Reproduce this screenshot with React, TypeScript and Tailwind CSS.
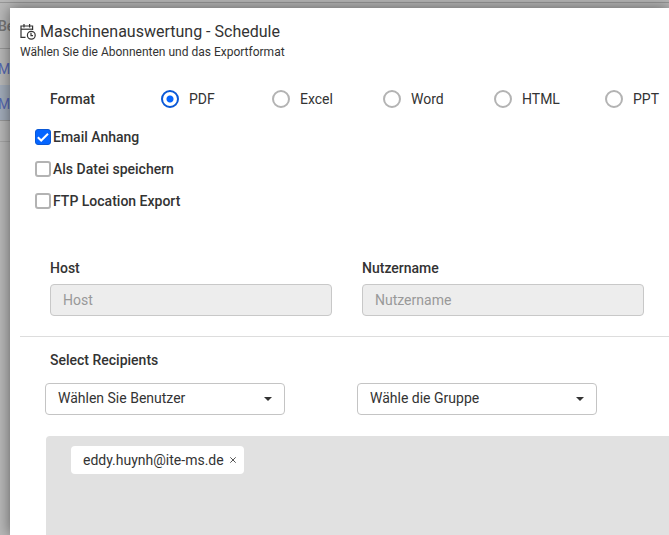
import { useState } from "react";

const formats = ["PDF", "Excel", "Word", "HTML", "PPT"];

const CalendarClockIcon = () => (
  <svg width="16" height="16" viewBox="0 0 16 16" fill="none" stroke="#333333" strokeWidth="1.2" aria-hidden="true">
    <path d="M5.5 13.4H1V2h11.6v4" />
    <path d="M1 5.2h11.6" />
    <path d="M4 0v3.4M9.6 0v3.4" />
    <circle cx="11.3" cy="11.3" r="3.9" />
    <path d="M11 8.8v2.8h2" />
  </svg>
);

const Page = () => (
  <table className="-ml-[2px] w-[calc(100%+2px)] border-collapse border-t border-[#989898] text-left text-sm">
    <thead>
      <tr className="h-[46px] border-b border-[#989898] text-[#777777]">
        <th className="font-medium">Be</th>
      </tr>
    </thead>
    <tbody className="text-[#5668b5]">
      <tr className="h-9">
        <td className="pt-1">Ma</td>
      </tr>
      <tr className="h-9 border-b border-[#989898] bg-[#a3adbb]">
        <td className="pt-1">Ma</td>
      </tr>
      <tr className="h-[21px] border-b border-[#a5a5a5]">
        <td></td>
      </tr>
    </tbody>
  </table>
);

const Dropdown = ({ label, options }: { label: string; options: string[] }) => (
  <div className="relative w-60">
    <select
      aria-label={label}
      className="block h-8 w-full appearance-none rounded border border-[#c4c4c4] bg-white px-3 pb-[2px] text-sm text-[#333333]"
    >
      <option>{label}</option>
      {options.map((option) => (
        <option key={option}>{option}</option>
      ))}
    </select>
    <svg
      className="pointer-events-none absolute top-[14px] right-[13px]"
      width="8"
      height="4"
      viewBox="0 0 8 4"
      fill="#333333"
      aria-hidden="true"
    >
      <path d="M0 0h8L4 4z" />
    </svg>
  </div>
);

const TextField = ({ id, label }: { id: string; label: string }) => (
  <div className="w-[282px] shrink-0">
    <label htmlFor={id} className="block text-sm leading-6 font-medium">
      {label}
    </label>
    <input
      id={id}
      type="text"
      disabled
      placeholder={label}
      className="mt-1 block h-8 w-full rounded border border-[#c8c8c8] bg-[#ededed] px-3 text-sm placeholder:text-[#999999]"
    />
  </div>
);

const App = () => {
  const [format, setFormat] = useState("PDF");
  const [targets, setTargets] = useState([
    { name: "Email Anhang", checked: true },
    { name: "Als Datei speichern", checked: false },
    { name: "FTP Location Export", checked: false },
  ]);
  const [recipients, setRecipients] = useState(["eddy.huynh@ite-ms.de"]);

  const toggleTarget = (name: string) => {
    setTargets((prev) =>
      prev.map((target) => (target.name === name ? { ...target, checked: !target.checked } : target))
    );
  };

  const removeRecipient = (email: string) => {
    setRecipients((prev) => prev.filter((item) => item !== email));
  };

  return (
    <div className="relative min-h-screen overflow-hidden bg-[#b9b9b9] pt-[2px] font-['Roboto',sans-serif] text-[#333333]">
      <Page />
      <div
        role="dialog"
        aria-labelledby="dialog-title"
        className="absolute top-2 right-0 bottom-0 left-[10px] flex flex-col overflow-hidden bg-white pt-3 pl-[10px] shadow-[0_0_14px_rgba(0,0,0,0.5)]"
      >
        <header>
          <h1 id="dialog-title" className="flex items-center gap-1 text-base leading-6">
            <CalendarClockIcon />
            Maschinenauswertung - Schedule
          </h1>
          <p className="text-xs leading-4">Wählen Sie die Abonnenten und das Exportformat</p>
        </header>

        <div
          role="radiogroup"
          aria-labelledby="format-label"
          className="mt-[23px] flex h-8 items-center pl-[30px] text-sm"
        >
          <span id="format-label" className="w-[111px] shrink-0 font-medium">
            Format
          </span>
          {formats.map((item) => (
            <label key={item} className="flex w-[111px] shrink-0 items-center gap-[10px]">
              <input
                type="radio"
                name="format"
                checked={format === item}
                onChange={() => setFormat(item)}
                className="size-[18px] appearance-none rounded-full border-2 border-[#b3b3b3] bg-white checked:border-[#0a58d6] checked:bg-[radial-gradient(circle,#0565ff_3px,#ffffff_4px)]"
              />
              {item}
            </label>
          ))}
        </div>

        <div className="mt-[6px] pl-[15px]">
          {targets.map((target) => (
            <label key={target.name} className="flex h-8 items-center gap-[2px] text-sm font-medium">
              <span className="relative size-4">
                <input
                  type="checkbox"
                  checked={target.checked}
                  onChange={() => toggleTarget(target.name)}
                  className="block size-4 appearance-none rounded-[3px] border-2 border-[#b3b3b3] bg-white checked:border checked:border-[#0a58d6] checked:bg-[#0565ff]"
                />
                {target.checked && (
                  <svg
                    className="pointer-events-none absolute inset-0"
                    width="16"
                    height="16"
                    viewBox="0 0 16 16"
                    fill="none"
                    stroke="white"
                    strokeWidth="2"
                    aria-hidden="true"
                  >
                    <path d="M2.8 8.2l3.4 3.3 6.8-6.7" />
                  </svg>
                )}
              </span>
              {target.name}
            </label>
          ))}
        </div>

        <div className="mt-[39px] flex gap-[30px] pl-[30px]">
          <TextField id="host" label="Host" />
          <TextField id="username" label="Nutzername" />
        </div>

        <hr className="mt-5 border-[#dddddd]" />

        <h2 className="mt-[11px] pl-[30px] text-sm leading-6 font-medium">Select Recipients</h2>
        <div className="mt-[11px] flex gap-[72px] pl-[25px]">
          <Dropdown label="Wählen Sie Benutzer" options={["Eddy Huynh"]} />
          <Dropdown label="Wähle die Gruppe" options={["Administratoren"]} />
        </div>

        <ul className="mt-[21px] ml-[26px] flex flex-1 flex-wrap content-start rounded-tl bg-[#e1e1e1] px-[25px] py-[10px]">
          {recipients.map((email) => (
            <li key={email} className="flex h-7 items-center gap-[6px] rounded bg-white pr-2 pl-3 text-sm">
              {email}
              <button type="button" aria-label={`${email} entfernen`} onClick={() => removeRecipient(email)}>
                <svg width="6" height="6" viewBox="0 0 6 6" stroke="#555555" strokeWidth="1" aria-hidden="true">
                  <path d="M0.3 0.3l5.4 5.4M5.7 0.3L0.3 5.7" />
                </svg>
              </button>
            </li>
          ))}
        </ul>
      </div>
    </div>
  );
};

export default App;
